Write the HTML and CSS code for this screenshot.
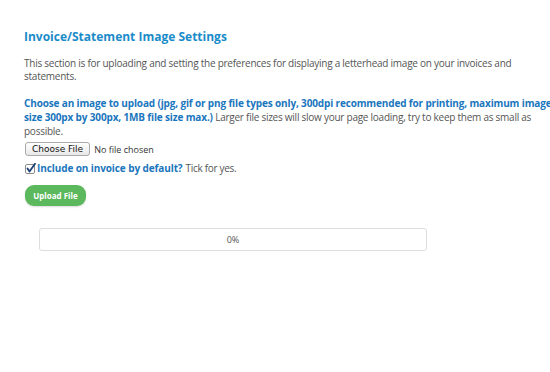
FILE: index.html
```html
<!DOCTYPE html>
<html lang="en">
<head>
    <meta charset="UTF-8">
    <title>Invoice/Statement Image Settings</title>
    <link rel="stylesheet" href="styles.css">
</head>
<body>
    <div class="settings">
        <h2>Invoice/Statement Image Settings</h2>
        <p class="intro">This section is for uploading and setting the preferences for displaying a letterhead image on your invoices and statements.</p>

        <p class="choose">
            <strong>Choose an image to upload (jpg, gif or png file types only, 300dpi recommended for printing, maximum image size 300px by 300px, 1MB file size max.)</strong>
            Larger file sizes will slow your page loading, try to keep them as small as possible.
        </p>

        <div class="file-row">
            <label class="file-btn">Choose File<input type="file"></label>
            <span class="file-name">No file chosen</span>
        </div>

        <label class="include">
            <input type="checkbox" checked>
            <svg class="tick" width="11" height="11" viewBox="0 0 11 11">
                <rect x="0.5" y="1.5" width="9" height="9" rx="1.5" fill="#fff" stroke="#8a8a8a"/>
                <path d="M2.5 5.5 L4.5 8.5 L10 0.8" fill="none" stroke="#1d3f73" stroke-width="1.8" stroke-linecap="round" stroke-linejoin="round"/>
            </svg>
            <strong>Include on invoice by default?</strong> Tick for yes.
        </label>

        <button class="upload-btn">Upload File</button>

        <div class="progress">0%</div>
    </div>
</body>
</html>
```

FILE: styles.css
```css
body {
    margin: 0;
    background: #fff;
    font-family: "Open Sans", sans-serif;
    color: #555;
    overflow: hidden;
}
.settings {
    padding: 28px 0 0 24px;
}
.settings h2 {
    margin: 0 0 12px 0;
    font-size: 12px;
    font-weight: 700;
    color: #1a8bc9;
}
.intro {
    margin: 0 0 13px 0;
    font-size: 10px;
    line-height: 13px;
    letter-spacing: -0.25px;
    width: 500px;
}
.choose {
    margin: 0 0 4px 0;
    font-size: 10px;
    line-height: 14px;
    letter-spacing: -0.25px;
    width: 540px;
}
.choose strong {
    color: #1a76bd;
    letter-spacing: -0.15px;
}
.file-row {
    display: flex;
    align-items: center;
    gap: 4px;
    font-size: 9px;
    color: #333;
}
.file-btn {
    display: inline-block;
    padding: 1px 6px;
    margin-left: 1px;
    border: 1px solid #aaa;
    border-radius: 3px;
    background: linear-gradient(#fff, #e8e8e8);
    font-family: "DejaVu Sans", sans-serif;
    font-size: 9px;
    color: #111;
}
.file-btn input {
    display: none;
}
.include {
    display: flex;
    align-items: center;
    margin-top: 5px;
    font-size: 10px;
    letter-spacing: -0.3px;
    color: #555;
}
.include input {
    display: none;
}
.tick {
    margin: 0 1px 0 1px;
}
.include strong {
    color: #1a76bd;
    margin-right: 3px;
    letter-spacing: -0.1px;
}
.upload-btn {
    display: block;
    margin: 10px 0 0 1px;
    width: 61px;
    height: 21px;
    padding: 0;
    border: none;
    border-radius: 9px;
    background: #5cb85c;
    box-shadow: 0 1px 2px rgba(0,0,0,0.15);
    color: #fff;
    font-family: "Open Sans", sans-serif;
    font-size: 8px;
    font-weight: 700;
}
.progress {
    width: 386px;
    height: 21px;
    margin: 22px 0 0 15px;
    border: 1px solid #ddd;
    border-radius: 3px;
    font-size: 9px;
    line-height: 21px;
    text-align: center;
    color: #555;
}
```
